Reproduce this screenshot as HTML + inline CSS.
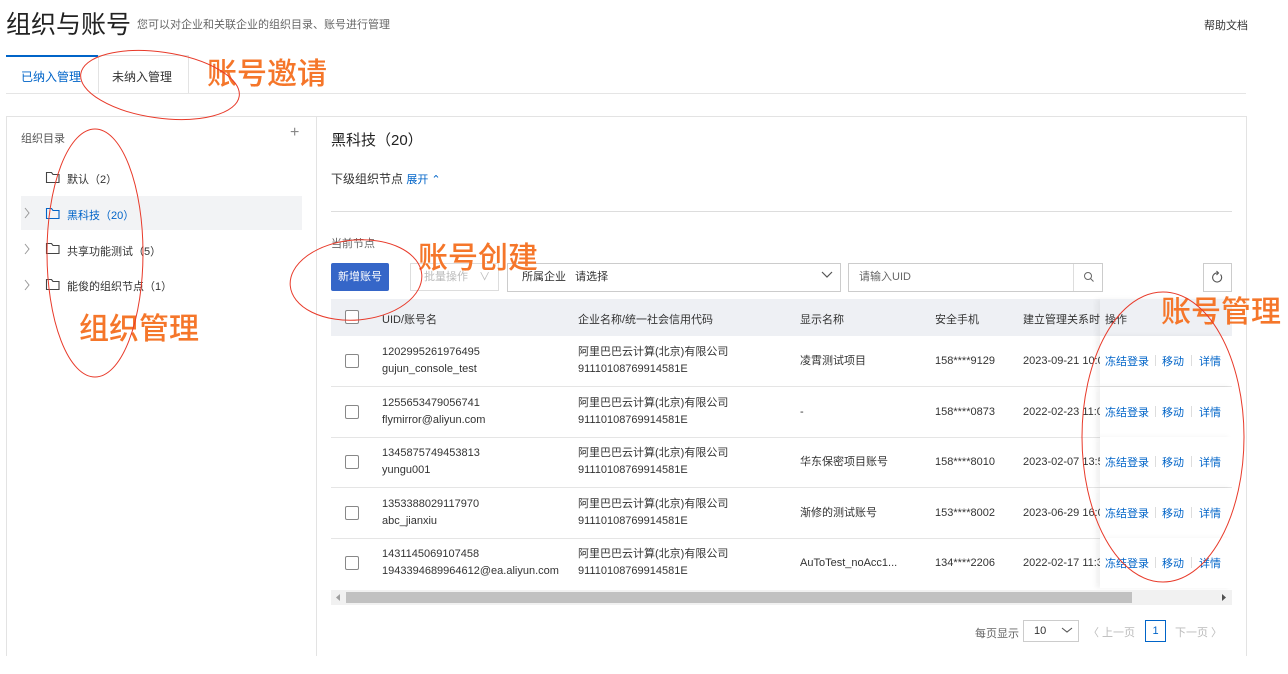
<!DOCTYPE html>
<html><head><meta charset="utf-8">
<style>
*{margin:0;padding:0;box-sizing:border-box}
body{width:1288px;height:674px;background:#fff;font-family:"Liberation Sans","Noto Sans CJK SC",sans-serif;color:#333;position:relative;overflow:hidden}
.a{position:absolute;white-space:nowrap}
.blue{color:#0064c8}
.t12{font-size:12px}
.t11{font-size:11px}
.row{position:absolute;left:331px;width:901px;height:51px;border-bottom:1px solid #e5e5e5;font-size:11px;color:#333}
.row .c{position:absolute;line-height:17px}
.cb{position:absolute;width:14px;height:14px;border:1px solid #888;border-radius:2px;background:#fff}
.ops{position:absolute;left:769px;top:0;width:132px;height:50px;background:#fff;box-shadow:-4px 0 5px rgba(0,0,0,.06)}
.ops span{position:absolute;top:17px;font-size:11px;color:#0064c8}
.ops i{position:absolute;top:19px;width:1px;height:11px;background:#ddd}
.orange{color:#f5762a;font-size:30px;font-weight:500}
</style></head><body>

<div class="a" style="left:6px;top:5px;font-size:25px;color:#222">组织与账号</div>
<div class="a t11" style="left:137px;top:16px;color:#666">您可以对企业和关联企业的组织目录、账号进行管理</div>
<div class="a t11" style="left:1204px;top:17px;color:#333">帮助文档</div>

<!-- tabs -->
<div class="a" style="left:6px;top:55px;width:92px;height:39px;border-top:2px solid #0064c8;background:#fff"></div>
<div class="a t12 blue" style="left:21px;top:68px">已纳入管理</div>
<div class="a" style="left:98px;top:55px;width:91px;height:39px;border:1px solid #e3e3e3;border-bottom:none;background:#fff"></div>
<div class="a t12" style="left:112px;top:68px;color:#333">未纳入管理</div>
<div class="a" style="left:6px;top:93px;width:1240px;height:1px;background:#e5e5e5"></div>

<!-- main panel -->
<div class="a" style="left:6px;top:116px;width:1241px;height:540px;border:1px solid #e3e3e3;border-bottom:none"></div>
<div class="a" style="left:316px;top:116px;width:1px;height:540px;background:#e3e3e3"></div>

<div class="a t11" style="left:21px;top:130px;color:#555">组织目录</div>
<div class="a" style="left:290px;top:124px;font-size:16px;color:#888;font-weight:300">+</div>

<div class="a" style="left:21px;top:196px;width:281px;height:34px;background:#f2f3f5"></div>
<svg class="a" style="left:0;top:0" width="320" height="300">
 <g fill="none" stroke="#999" stroke-width="1">
  <path d="M25 208 l4 5 -4 5"/><path d="M25 244 l4 5 -4 5"/><path d="M25 280 l4 5 -4 5"/>
 </g>
 <g fill="none" stroke-width="1.1">
  <path stroke="#444" d="M46.5 172.5 h5 l1.5 2 h6 v8 h-12.5z"/>
  <path stroke="#0064c8" d="M46.5 208.5 h5 l1.5 2 h6 v8 h-12.5z"/>
  <path stroke="#444" d="M46.5 243.5 h5 l1.5 2 h6 v8 h-12.5z"/>
  <path stroke="#444" d="M46.5 279.5 h5 l1.5 2 h6 v8 h-12.5z"/>
 </g>
</svg>
<div class="a t11" style="left:67px;top:171px">默认（2）</div>
<div class="a t11 blue" style="left:67px;top:207px">黑科技（20）</div>
<div class="a t11" style="left:67px;top:243px">共享功能测试（5）</div>
<div class="a t11" style="left:67px;top:278px">能俊的组织节点（1）</div>

<!-- right -->
<div class="a" style="left:331px;top:129px;font-size:15px;color:#222">黑科技（20）</div>
<div class="a t12" style="left:331px;top:170px;color:#333">下级组织节点 <span class="blue t11">展开 ⌃</span></div>
<div class="a" style="left:331px;top:211px;width:901px;height:1px;background:#ddd"></div>
<div class="a t11" style="left:331px;top:235px;color:#666">当前节点</div>

<div class="a" style="left:331px;top:263px;width:58px;height:28px;background:#3566c8;border-radius:2px;color:#fff;font-size:11px;line-height:28px;text-align:center">新增账号</div>
<div class="a" style="left:410px;top:263px;width:89px;height:28px;border:1px solid #ddd;font-size:11px;color:#bbb;line-height:26px;padding-left:13px">批量操作 <span style="margin-left:8px">∨</span></div>
<div class="a" style="left:507px;top:263px;width:334px;height:29px;border:1px solid #ccc;font-size:11px;line-height:27px;padding-left:14px;color:#333">所属企业 &nbsp; 请选择</div>
<svg class="a" style="left:820px;top:270px" width="14" height="10"><path d="M2 2 l5 5 5-5" fill="none" stroke="#555" stroke-width="1.2"/></svg>
<div class="a" style="left:848px;top:263px;width:255px;height:29px;border:1px solid #ccc;font-size:11px;line-height:27px;padding-left:10px;color:#666">请输入UID</div>
<div class="a" style="left:1073px;top:264px;width:1px;height:27px;background:#ddd"></div>
<svg class="a" style="left:1082px;top:270px" width="14" height="14"><circle cx="6" cy="6" r="3.5" fill="none" stroke="#666"/><path d="M8.5 8.5 l3 3" stroke="#666"/></svg>
<div class="a" style="left:1203px;top:263px;width:29px;height:29px;border:1px solid #ccc"></div>
<svg class="a" style="left:1210px;top:270px" width="15" height="15"><path d="M10.5 4.5 A4.5 4.5 0 1 1 7.5 3" fill="none" stroke="#555" stroke-width="1.1"/><path d="M6.5 1 l2 2 -2 2" fill="none" stroke="#555" stroke-width="1.1"/></svg>

<!-- table header -->
<div class="a" style="left:331px;top:299px;width:901px;height:37px;background:#eef0f4"></div>
<div class="cb" style="left:345px;top:310px"></div>
<div class="a t11" style="left:382px;top:311px">UID/账号名</div>
<div class="a t11" style="left:578px;top:311px">企业名称/统一社会信用代码</div>
<div class="a t11" style="left:800px;top:311px">显示名称</div>
<div class="a t11" style="left:935px;top:311px">安全手机</div>
<div class="a t11" style="left:1023px;top:311px;width:77px;overflow:hidden">建立管理关系时间</div>
<div class="a" style="left:1100px;top:299px;width:132px;height:37px;background:#eef0f4;box-shadow:-4px 0 5px rgba(0,0,0,.05)"></div>
<div class="a t11" style="left:1105px;top:311px">操作</div>

<div class="row" style="top:336px"><div class="cb" style="left:14px;top:18px"></div>
<div class="c" style="left:51px;top:8px">1202995261976495<br>gujun_console_test</div>
<div class="c" style="left:247px;top:8px">阿里巴巴云计算(北京)有限公司<br>91110108769914581E</div>
<div class="c" style="left:469px;top:17px">凌霄测试项目</div>
<div class="c" style="left:604px;top:17px">158****9129</div>
<div class="c" style="left:692px;top:17px">2023-09-21 10:00</div>
<div class="ops"><span style="left:5px">冻结登录</span><i style="left:55px"></i><span style="left:62px">移动</span><i style="left:91px"></i><span style="left:99px">详情</span></div></div>

<div class="row" style="top:387px"><div class="cb" style="left:14px;top:18px"></div>
<div class="c" style="left:51px;top:8px">1255653479056741<br>flymirror@aliyun.com</div>
<div class="c" style="left:247px;top:8px">阿里巴巴云计算(北京)有限公司<br>91110108769914581E</div>
<div class="c" style="left:469px;top:17px">-</div>
<div class="c" style="left:604px;top:17px">158****0873</div>
<div class="c" style="left:692px;top:17px">2022-02-23 11:00</div>
<div class="ops"><span style="left:5px">冻结登录</span><i style="left:55px"></i><span style="left:62px">移动</span><i style="left:91px"></i><span style="left:99px">详情</span></div></div>

<div class="row" style="top:437px"><div class="cb" style="left:14px;top:18px"></div>
<div class="c" style="left:51px;top:8px">1345875749453813<br>yungu001</div>
<div class="c" style="left:247px;top:8px">阿里巴巴云计算(北京)有限公司<br>91110108769914581E</div>
<div class="c" style="left:469px;top:17px">华东保密项目账号</div>
<div class="c" style="left:604px;top:17px">158****8010</div>
<div class="c" style="left:692px;top:17px">2023-02-07 13:50</div>
<div class="ops"><span style="left:5px">冻结登录</span><i style="left:55px"></i><span style="left:62px">移动</span><i style="left:91px"></i><span style="left:99px">详情</span></div></div>

<div class="row" style="top:488px"><div class="cb" style="left:14px;top:18px"></div>
<div class="c" style="left:51px;top:8px">1353388029117970<br>abc_jianxiu</div>
<div class="c" style="left:247px;top:8px">阿里巴巴云计算(北京)有限公司<br>91110108769914581E</div>
<div class="c" style="left:469px;top:17px">渐修的测试账号</div>
<div class="c" style="left:604px;top:17px">153****8002</div>
<div class="c" style="left:692px;top:17px">2023-06-29 16:00</div>
<div class="ops"><span style="left:5px">冻结登录</span><i style="left:55px"></i><span style="left:62px">移动</span><i style="left:91px"></i><span style="left:99px">详情</span></div></div>

<div class="row" style="top:538px;border-bottom:none"><div class="cb" style="left:14px;top:18px"></div>
<div class="c" style="left:51px;top:8px">1431145069107458<br>1943394689964612@ea.aliyun.com</div>
<div class="c" style="left:247px;top:8px">阿里巴巴云计算(北京)有限公司<br>91110108769914581E</div>
<div class="c" style="left:469px;top:17px">AuToTest_noAcc1...</div>
<div class="c" style="left:604px;top:17px">134****2206</div>
<div class="c" style="left:692px;top:17px">2022-02-17 11:30</div>
<div class="ops"><span style="left:5px">冻结登录</span><i style="left:55px"></i><span style="left:62px">移动</span><i style="left:91px"></i><span style="left:99px">详情</span></div></div>

<!-- scrollbar -->
<div class="a" style="left:331px;top:590px;width:901px;height:15px;background:#f1f1f1"></div>
<div class="a" style="left:346px;top:592px;width:786px;height:11px;background:#c1c1c1"></div>
<svg class="a" style="left:334px;top:593px" width="8" height="9"><path d="M6 1 L2 4.5 6 8z" fill="#a0a0a0"/></svg>
<svg class="a" style="left:1220px;top:593px" width="8" height="9"><path d="M2 1 L6 4.5 2 8z" fill="#505050"/></svg>

<!-- pagination -->
<div class="a t11" style="left:975px;top:625px;color:#666">每页显示</div>
<div class="a t11" style="left:1023px;top:620px;width:56px;height:22px;border:1px solid #ccc;line-height:20px;padding-left:10px">10</div>
<svg class="a" style="left:1061px;top:626px" width="12" height="9"><path d="M1 2 l5 4 5-4" fill="none" stroke="#555" stroke-width="1.1"/></svg>
<div class="a t11" style="left:1088px;top:624px;color:#bbb">〈 上一页</div>
<div class="a t11 blue" style="left:1145px;top:620px;width:21px;height:22px;border:1px solid #0064c8;line-height:20px;text-align:center">1</div>
<div class="a t11" style="left:1175px;top:624px;color:#bbb">下一页 〉</div>

<!-- annotations -->
<div class="a orange" style="left:207px;top:49px">账号邀请</div>
<div class="a orange" style="left:79px;top:304px">组织管理</div>
<div class="a orange" style="left:418px;top:233px">账号创建</div>
<div class="a orange" style="left:1161px;top:287px">账号管理</div>
<svg class="a" style="left:0;top:0" width="1288" height="674">
 <g fill="none" stroke="#e83a2a" stroke-width="1">
  <ellipse cx="160" cy="85" rx="80" ry="33" transform="rotate(8 160 85)"/>
  <ellipse cx="95" cy="253" rx="48" ry="124"/>
  <ellipse cx="356" cy="280" rx="66" ry="40" transform="rotate(-5 356 280)"/>
  <ellipse cx="1163" cy="437" rx="81" ry="145"/>
 </g>
</svg>
</body></html>
